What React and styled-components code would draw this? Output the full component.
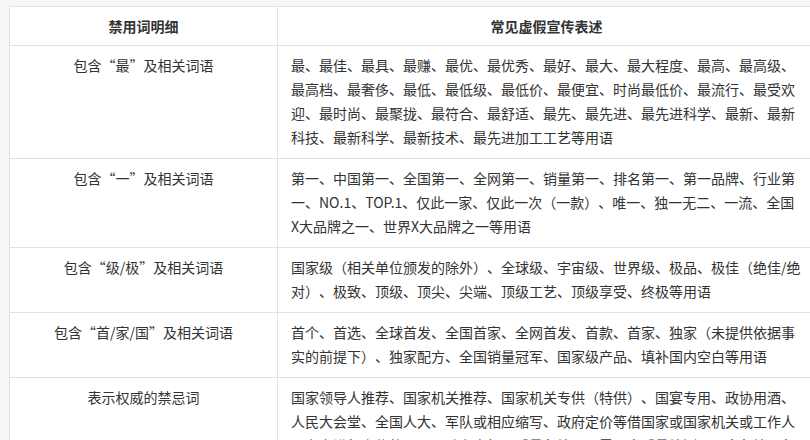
import React from 'react'
import styled, { createGlobalStyle } from 'styled-components'

const GlobalStyle = createGlobalStyle`
  html, body {
    margin: 0;
    padding: 0;
    overflow: hidden;
    background: #f6f6f6;
  }
  body {
    font-family: "Noto Sans CJK SC", "Noto Sans", sans-serif;
    color: #333;
  }
`

const Page = styled.div`
  padding: 6px 0 0 9px;
  width: 820px;
`

const Table = styled.table`
  width: 806px;
  table-layout: fixed;
  border-collapse: collapse;
  background: #fff;
  font-size: 14px;
  line-height: 24px;
  text-spacing-trim: space-all;
`

const Col = styled.col`
  width: ${p => p.$w}px;
`

const HeadCell = styled.th`
  border: 1px solid #e2e2e2;
  padding: 7px 13px;
  font-weight: 700;
  color: #333;
  text-align: center;
`

const NameCell = styled.td`
  border: 1px solid #e2e2e2;
  padding: 7px 13px 9px;
  text-align: center;
  vertical-align: top;
  color: #333;
`

const DescCell = styled.td`
  border: 1px solid #e2e2e2;
  padding: 7px 13px 9px;
  text-align: left;
  vertical-align: top;
  color: #333;
  word-break: break-all;
`

const rows = [
  {
    name: '包含“最”及相关词语',
    desc: '最、最佳、最具、最赚、最优、最优秀、最好、最大、最大程度、最高、最高级、最高档、最奢侈、最低、最低级、最低价、最便宜、时尚最低价、最流行、最受欢迎、最时尚、最聚拢、最符合、最舒适、最先、最先进、最先进科学、最新、最新科技、最新科学、最新技术、最先进加工工艺等用语',
  },
  {
    name: '包含“一”及相关词语',
    desc: '第一、中国第一、全国第一、全网第一、销量第一、排名第一、第一品牌、行业第一、NO.1、TOP.1、仅此一家、仅此一次（一款）、唯一、独一无二、一流、全国X大品牌之一、世界X大品牌之一等用语',
  },
  {
    name: '包含“级/极”及相关词语',
    desc: '国家级（相关单位颁发的除外）、全球级、宇宙级、世界级、极品、极佳（绝佳/绝对）、极致、顶级、顶尖、尖端、顶级工艺、顶级享受、终极等用语',
  },
  {
    name: '包含“首/家/国”及相关词语',
    desc: '首个、首选、全球首发、全国首家、全网首发、首款、首家、独家（未提供依据事实的前提下）、独家配方、全国销量冠军、国家级产品、填补国内空白等用语',
  },
  {
    name: '表示权威的禁忌词',
    desc: '国家领导人推荐、国家机关推荐、国家机关专供（特供）、国宴专用、政协用酒、人民大会堂、全国人大、军队或相应缩写、政府定价等借国家或国家机关或工作人员名义进行宣传的用语；驰名商标、质量免检、无需国家质量检测、国家免检、免抽检等用语',
  },
]

export default function App() {
  return (
    <Page>
      <GlobalStyle />
      <Table>
        <colgroup>
          <Col $w={268} />
          <Col $w={538} />
        </colgroup>
        <thead>
          <tr>
            <HeadCell>禁用词明细</HeadCell>
            <HeadCell>常见虚假宣传表述</HeadCell>
          </tr>
        </thead>
        <tbody>
          {rows.map(row => (
            <tr key={row.name}>
              <NameCell>{row.name}</NameCell>
              <DescCell>{row.desc}</DescCell>
            </tr>
          ))}
        </tbody>
      </Table>
    </Page>
  )
}
